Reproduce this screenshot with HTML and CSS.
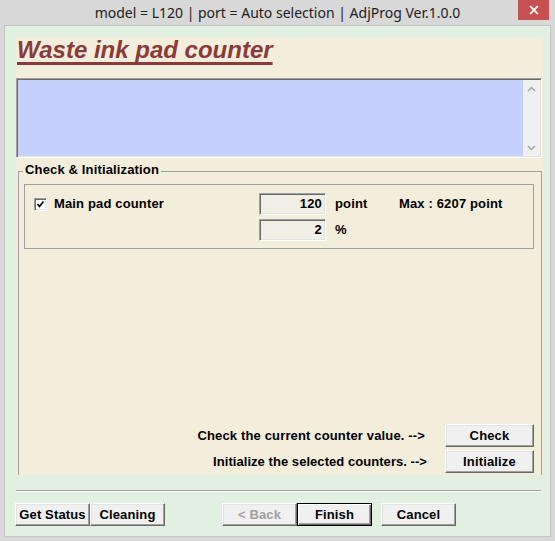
FILE: index.html
```html
<!DOCTYPE html>
<html lang="en">
<head>
<meta charset="utf-8">
<title>Waste ink pad counter</title>
<link rel="stylesheet" href="styles.css">
</head>
<body>
<div class="window">
  <div class="titlebar">
    <div class="title">model = L120 | port = Auto selection | AdjProg Ver.1.0.0</div>
    <div class="close">
      <svg width="10" height="10" viewBox="0 0 10 10"><path d="M1.2 1.2L8.8 8.8M8.8 1.2L1.2 8.8" stroke="#fff" stroke-width="1.8" fill="none"/></svg>
    </div>
  </div>
  <div class="client">
    <div class="panel">
      <h1 class="heading">Waste ink pad counter</h1>
      <div class="log">
        <div class="log-text"></div>
        <div class="scrollbar">
          <div class="arrow"><svg width="9" height="6" viewBox="0 0 9 6"><polyline points="1,5 4.5,1.5 8,5" fill="none" stroke="#a6a6a6" stroke-width="1.5"/></svg></div>
          <div class="arrow"><svg width="9" height="6" viewBox="0 0 9 6"><polyline points="1,1 4.5,4.5 8,1" fill="none" stroke="#a6a6a6" stroke-width="1.5"/></svg></div>
        </div>
      </div>
      <section class="group">
        <div class="group-head">
          <span class="head-line head-line-start"></span>
          <span class="group-label">Check &amp; Initialization</span>
          <span class="head-line head-line-end"></span>
        </div>
        <div class="group-body">
          <div class="counter-box">
            <div class="counter-row">
              <div class="name-cell">
                <span class="checkbox"><svg width="9" height="9" viewBox="0 0 9 9"><polyline points="1.5,4 3.5,6.5 7.5,1.5" fill="none" stroke="#000" stroke-width="1.7"/></svg></span>
                <span>Main pad counter</span>
              </div>
              <div class="field">120</div>
              <div class="unit">point</div>
              <div class="max">Max : 6207 point</div>
            </div>
            <div class="counter-row">
              <div class="name-cell"></div>
              <div class="field">2</div>
              <div class="unit">%</div>
            </div>
          </div>
          <div class="actions">
            <div class="action-row">
              <span>Check the current counter value. --&gt;</span>
              <button class="btn btn-wide">Check</button>
            </div>
            <div class="action-row action-row-tight">
              <span>Initialize the selected counters. --&gt;</span>
              <button class="btn btn-wide">Initialize</button>
            </div>
          </div>
        </div>
      </section>
    </div>
    <div class="separator"></div>
    <div class="footer">
      <div class="btn-group">
        <button class="btn">Get Status</button>
        <button class="btn">Cleaning</button>
      </div>
      <div class="btn-group nav">
        <button class="btn btn-disabled">&lt; Back</button>
        <button class="btn btn-default">Finish</button>
      </div>
      <button class="btn cancel">Cancel</button>
    </div>
  </div>
</div>
</body>
</html>
```
FILE: styles.css
```css
* { box-sizing: border-box; }
html, body { margin: 0; padding: 0; }
body {
  width: 555px;
  height: 541px;
  overflow: hidden;
  background: #d8d8d8;
  font-family: "Liberation Sans", Arial, sans-serif;
  font-size: 13px;
  font-weight: bold;
  letter-spacing: 0.15px;
  color: #000;
}
.window {
  width: 555px;
  height: 541px;
  display: flex;
  flex-direction: column;
  background: #d8d8d8;
}
.titlebar {
  height: 25px;
  flex: none;
  display: grid;
  grid-template-columns: 38px 1fr 38px;
}
.title {
  grid-column: 2;
  text-align: center;
  font-family: "Noto Sans", sans-serif;
  font-weight: normal;
  font-size: 14px;
  letter-spacing: 0;
  line-height: 25px;
  color: #222;
  white-space: nowrap;
}
.close {
  grid-column: 3;
  margin-left: 1px;
  width: 31px;
  height: 20px;
  background: #c75050;
  display: flex;
  align-items: center;
  justify-content: center;
}
.client {
  flex: 1;
  margin: 0 4px 4px 4px;
  border: 1px solid #c4c4c4;
  background: #e2f0e2;
  padding: 11px 7px 0 11px;
  display: flex;
  flex-direction: column;
}
.panel {
  height: 438px;
  flex: none;
  background: #f3eddb;
  display: flex;
  flex-direction: column;
}
.heading {
  margin: 0;
  padding: 1px 0 0 1px;
  font-size: 24px;
  line-height: 24px;
  font-style: italic;
  font-weight: bold;
  letter-spacing: 0;
  color: #8b3a3a;
  text-decoration: underline;
  text-decoration-thickness: 3px;
  text-underline-offset: 3.5px;
  text-decoration-skip-ink: none;
}
.log {
  margin: 16px 1px 0 0;
  height: 80px;
  flex: none;
  display: flex;
  border: 1px solid;
  border-color: #a0a0a0 #fff #fff #a0a0a0;
  padding: 1px;
  box-shadow: inset 1px 1px 0 #696969, inset -1px -1px 0 #e3e3e3;
}
.log-text {
  flex: 1;
  background: #c6d0fc;
}
.scrollbar {
  width: 17px;
  background: #f0f0f0;
  display: flex;
  flex-direction: column;
  justify-content: space-between;
}
.arrow {
  width: 17px;
  height: 17px;
  display: flex;
  align-items: center;
  justify-content: center;
}
.group {
  flex: 1;
  margin: 4px 1px 0 2px;
  display: flex;
  flex-direction: column;
}
.group-head {
  height: 16px;
  flex: none;
  display: flex;
  align-items: flex-end;
}
.head-line {
  height: 7px;
  border-top: 1px solid #a0a0a0;
}
.head-line-start {
  width: 5px;
  flex: none;
  border-left: 1px solid #a0a0a0;
}
.head-line-end {
  flex: 1;
  border-right: 1px solid #a0a0a0;
}
.group-label {
  align-self: stretch;
  padding: 0 2px;
  font-size: 13px;
  line-height: 16px;
}
.group-body {
  flex: 1;
  border-left: 1px solid #a0a0a0;
  border-right: 1px solid #a0a0a0;
  padding: 6px 7px 2px 5px;
  display: flex;
  flex-direction: column;
}
.counter-box {
  border: 1px solid #a0a0a0;
  padding: 8px 0 7px 0;
  display: flex;
  flex-direction: column;
  gap: 4px;
}
.counter-row {
  display: flex;
  align-items: center;
  height: 22px;
  line-height: 16px;
}
.name-cell {
  width: 234px;
  flex: none;
  padding-left: 9px;
  display: flex;
  align-items: center;
  gap: 7px;
}
.checkbox {
  width: 13px;
  height: 13px;
  flex: none;
  border: 1px solid;
  border-color: #a0a0a0 #fff #fff #a0a0a0;
  background: #fff;
  box-shadow: inset 1px 1px 0 #696969, inset -1px -1px 0 #e3e3e3;
  display: flex;
  align-items: center;
  justify-content: center;
}
.field {
  width: 67px;
  height: 22px;
  flex: none;
  border: 1px solid;
  border-color: #a0a0a0 #fff #fff #a0a0a0;
  box-shadow: inset 1px 1px 0 #696969, inset -1px -1px 0 #e3e3e3;
  background: #f1efe5;
  text-align: right;
  padding-right: 3px;
  line-height: 20px;
}
.unit {
  width: 73px;
  flex: none;
  padding-left: 9px;
}
.actions {
  margin-top: auto;
  display: flex;
  flex-direction: column;
  gap: 3px;
}
.action-row {
  display: flex;
  justify-content: flex-end;
  align-items: center;
  gap: 20px;
}
.action-row-tight {
  gap: 18px;
  letter-spacing: 0.05px;
}
.btn {
  width: 75px;
  height: 23px;
  flex: none;
  margin: 0;
  padding: 0;
  font-family: "Liberation Sans", Arial, sans-serif;
  font-size: 13px;
  font-weight: bold;
  letter-spacing: 0.15px;
  color: #000;
  background: #f0f0f0;
  border: 1px solid;
  border-color: #fff #696969 #696969 #fff;
  box-shadow: inset -1px -1px 0 #a0a0a0, inset 1px 1px 0 #e3e3e3;
  border-radius: 0;
}
.btn-wide { width: 89px; }
.btn-default {
  border-color: #000;
  box-shadow: inset 1px 1px 0 #fff, inset -1px -1px 0 #696969, inset -2px -2px 0 #a0a0a0;
}
.btn-disabled { color: #a0a0a0; }
.separator {
  margin: 15px 2px 0 0;
  height: 2px;
  flex: none;
  border-top: 1px solid #a0a0a0;
  border-bottom: 1px solid #fff;
}
.footer {
  margin: 11px 0 0 -1px;
  display: flex;
}
.btn-group { display: flex; }
.nav { margin-left: 57px; }
.cancel { margin-left: 9px; }
```
